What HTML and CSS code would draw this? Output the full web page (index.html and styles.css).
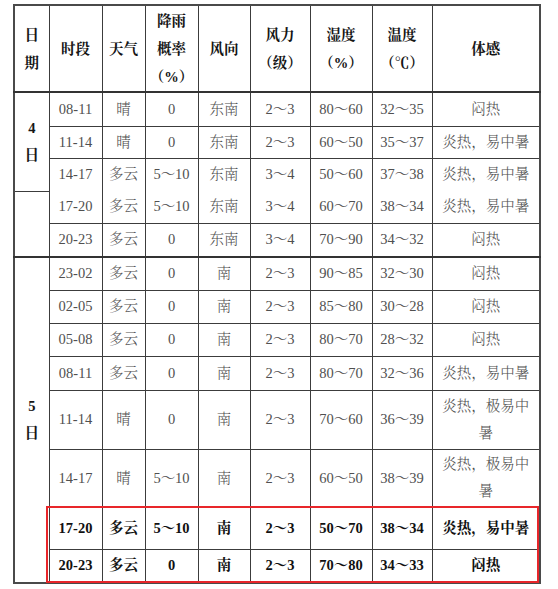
FILE: index.html
```html
<!DOCTYPE html>
<html lang="zh-CN">
<head>
<meta charset="utf-8">
<title>天气预报表</title>
<link rel="stylesheet" href="styles.css">
</head>
<body>
<div class="page">
  <div class="wrap">
    <table class="wx">
      <colgroup>
        <col class="c-date"><col class="c-time"><col class="c-sky"><col class="c-rain"><col class="c-dir"><col class="c-force"><col class="c-hum"><col class="c-temp"><col class="c-feel">
      </colgroup>
      <thead>
        <tr class="hd">
          <th>日<br>期</th>
          <th>时段</th>
          <th>天气</th>
          <th>降雨<br>概率<br>（%）</th>
          <th>风向</th>
          <th>风力<br>（级）</th>
          <th>湿度<br>（%）</th>
          <th>温度<br>（℃）</th>
          <th>体感</th>
        </tr>
      </thead>
      <tbody>
        <tr class="r34 thick">
          <td rowspan="3" class="date">4<br>日</td>
          <td>08-11</td><td>晴</td><td>0</td><td>东南</td><td>2～3</td><td>80～60</td><td>32～35</td><td>闷热</td>
        </tr>
        <tr class="r32">
          <td>11-14</td><td>晴</td><td>0</td><td>东南</td><td>2～3</td><td>60～50</td><td>35～37</td><td>炎热，易中暑</td>
        </tr>
        <tr class="r33 nobot">
          <td>14-17</td><td>多云</td><td>5～10</td><td>东南</td><td>3～4</td><td>50～60</td><td>37～38</td><td>炎热，易中暑</td>
        </tr>
        <tr class="r32 notop">
          <td rowspan="2" class="date"></td>
          <td>17-20</td><td>多云</td><td>5～10</td><td>东南</td><td>3～4</td><td>60～70</td><td>38～34</td><td>炎热，易中暑</td>
        </tr>
        <tr class="r34">
          <td>20-23</td><td>多云</td><td>0</td><td>东南</td><td>3～4</td><td>70～90</td><td>34～32</td><td>闷热</td>
        </tr>
        <tr class="r33 thick">
          <td rowspan="8" class="date">5<br>日</td>
          <td>23-02</td><td>多云</td><td>0</td><td>南</td><td>2～3</td><td>90～85</td><td>32～30</td><td>闷热</td>
        </tr>
        <tr class="r33">
          <td>02-05</td><td>多云</td><td>0</td><td>南</td><td>2～3</td><td>85～80</td><td>30～28</td><td>闷热</td>
        </tr>
        <tr class="r33">
          <td>05-08</td><td>多云</td><td>0</td><td>南</td><td>2～3</td><td>80～70</td><td>28～32</td><td>闷热</td>
        </tr>
        <tr class="r34">
          <td>08-11</td><td>多云</td><td>0</td><td>南</td><td>2～3</td><td>80～70</td><td>32～36</td><td>炎热，易中暑</td>
        </tr>
        <tr class="r59">
          <td>11-14</td><td>晴</td><td>0</td><td>南</td><td>2～3</td><td>70～60</td><td>36～39</td><td class="wrapcell">炎热，极易中暑</td>
        </tr>
        <tr class="r58">
          <td>14-17</td><td>晴</td><td>5～10</td><td>南</td><td>2～3</td><td>60～50</td><td>38～39</td><td class="wrapcell">炎热，极易中暑</td>
        </tr>
        <tr class="r42 bold">
          <td>17-20</td><td>多云</td><td>5～10</td><td>南</td><td>2～3</td><td>50～70</td><td>38～34</td><td>炎热，易中暑</td>
        </tr>
        <tr class="r34 bold">
          <td>20-23</td><td>多云</td><td>0</td><td>南</td><td>2～3</td><td>70～80</td><td>34～33</td><td>闷热</td>
        </tr>
      </tbody>
    </table>
    <div class="highlight"></div>
  </div>
</div>
</body>
</html>
```

FILE: styles.css
```css
html, body {
  margin: 0;
  padding: 0;
  background: #ffffff;
}

.page {
  padding: 4px 0 0 13px;
}

.wrap {
  position: relative;
  width: 526px;
}

.wx {
  width: 526px;
  border-collapse: collapse;
  table-layout: fixed;
  font-family: "Liberation Serif", "Noto Serif CJK SC", "Noto Sans CJK SC", serif;
  font-size: 14.5px;
  font-weight: 300;
  color: #505050;
  border: 2px solid #4a4a4a;
}

.c-date { width: 35px; }
.c-time { width: 53px; }
.c-sky { width: 43px; }
.c-rain { width: 53px; }
.c-dir { width: 52px; }
.c-force { width: 60px; }
.c-hum { width: 62px; }
.c-temp { width: 60px; }
.c-feel { width: 108px; }

.wx th,
.wx td {
  border: 1px solid #3c3c3c;
  padding: 0 4px;
  text-align: center;
  vertical-align: middle;
  line-height: 27px;
}

.wx th {
  font-weight: bold;
  color: #151515;
  line-height: 28px;
}

.hd { height: 87px; }

.wx td.date {
  font-weight: bold;
  color: #151515;
  padding: 0;
}

.thick td {
  border-top: 2px solid #333333;
}

.nobot td { border-bottom: none; }
.nobot td.date { border-bottom: 1px solid #3c3c3c; }
.notop td { border-top: none; }
.notop td.date { border-top: 1px solid #3c3c3c; }

.r32 { height: 32px; }
.r33 { height: 33px; }
.r34 { height: 34px; }
.r42 { height: 42px; }
.r58 { height: 58px; }
.r59 { height: 59px; }

.wrapcell {
  padding: 0 5px;
}

.bold td {
  font-weight: bold;
  color: #111111;
}

.highlight {
  position: absolute;
  left: 33px;
  top: 502px;
  width: 493px;
  height: 77px;
  border: 2px solid #e8262a;
  box-sizing: border-box;
  pointer-events: none;
}
```
